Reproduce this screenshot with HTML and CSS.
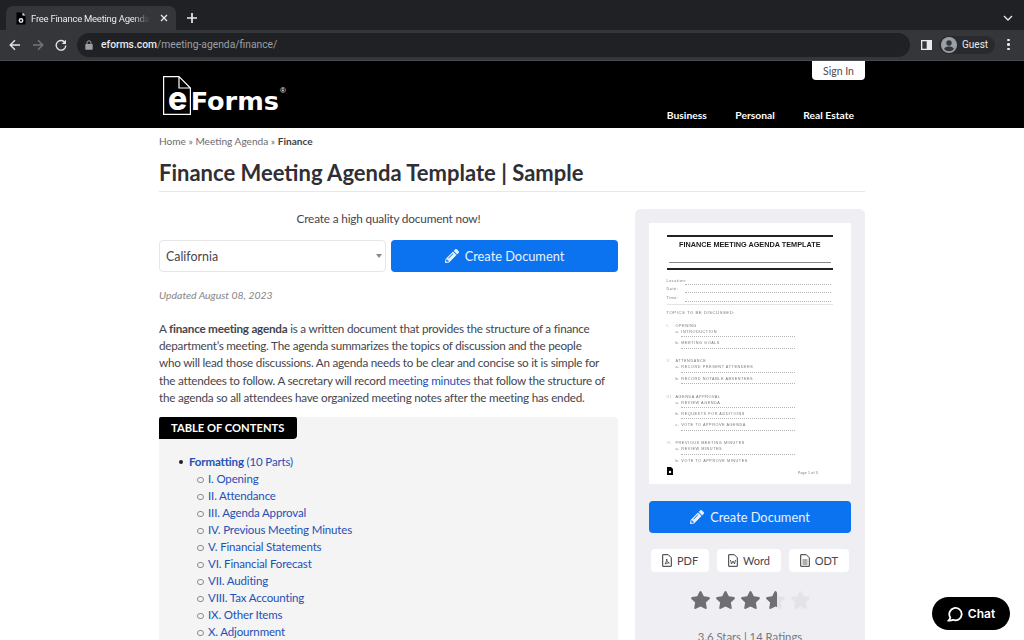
FILE: index.html
```html
<!DOCTYPE html>
<html lang="en">

<head>
    <meta charset="UTF-8">
    <meta name="viewport" content="width=device-width, initial-scale=1.0">
    <title>Finance Meeting Agenda Template</title>
    <link rel="stylesheet" href="styles.css">
</head>

<body>
    <svg class="defs" width="0" height="0">
        <defs>
            <symbol id="pencil" viewBox="0 0 512 512">
                <path fill="currentColor" d="M497.9 142.1l-46.1 46.1c-4.7 4.7-12.3 4.7-17 0l-111-111c-4.7-4.7-4.7-12.3 0-17l46.1-46.1c18.7-18.7 49.1-18.7 67.9 0l60.1 60.1c18.8 18.7 18.8 49.1 0 67.9zM284.2 99.8L21.6 362.4.4 483.9c-2.9 16.4 11.4 30.6 27.8 27.8l121.5-21.3 262.6-262.6c4.7-4.7 4.7-12.3 0-17l-111-111c-4.8-4.7-12.4-4.7-17.1 0zM124.1 339.9c-5.5-5.5-5.5-14.3 0-19.8l154-154c5.5-5.5 14.3-5.5 19.8 0s5.5 14.3 0 19.8l-154 154c-5.5 5.5-14.3 5.5-19.8 0zM88 424h48v36.3l-64.5 11.3-31.1-31.1L51.7 376H88v48z" />
            </symbol>
            <symbol id="star" viewBox="0 0 576 512">
                <path d="M259.3 17.8L194 150.2 47.9 171.5c-26.2 3.8-36.7 36.1-17.7 54.6l105.7 103-25 145.5c-4.5 26.3 23.2 46 46.4 33.7L288 439.6l130.7 68.7c23.2 12.2 50.9-7.4 46.4-33.7l-25-145.5 105.7-103c19-18.5 8.5-50.8-17.7-54.6L382 150.2 316.7 17.8c-11.7-23.6-45.6-23.9-57.4 0z" />
            </symbol>
            <linearGradient id="partStar">
                <stop offset="60%" stop-color="#6f6f73" />
                <stop offset="60%" stop-color="#e4e4e8" />
            </linearGradient>
        </defs>
    </svg>

    <div class="browser">
        <div class="tabstrip">
            <div class="tab">
                <svg class="favicon" viewBox="0 0 10 13" width="10" height="13">
                    <path fill="#000" d="M.5.5h6l3 3v9h-9z" />
                    <path fill="#e8eaed" d="M6.500.5l3 3h-3z" />
                    <circle cx="5" cy="8.500" r="2.400" fill="#e8eaed" />
                    <circle cx="5" cy="8.500" r="1" fill="#000" />
                </svg>
                <span class="tab-title">Free Finance Meeting Agenda</span>
                <svg class="tab-close" viewBox="0 0 10 10" width="10" height="10">
                    <path d="M2 2l6 6M8 2l-6 6" />
                </svg>
            </div>
            <svg class="new-tab" viewBox="0 0 12 12" width="12" height="12">
                <path d="M6 1v10M1 6h10" />
            </svg>
            <svg class="tab-menu" viewBox="0 0 10 6" width="10" height="6">
                <path d="M1 1l4 4 4-4" />
            </svg>
        </div>
        <div class="toolbar">
            <svg class="tool-icon back" viewBox="0 0 12 12" width="12" height="12">
                <path d="M11 6H1.500M6 1.200L1.200 6 6 10.800" />
            </svg>
            <svg class="tool-icon forward" viewBox="0 0 12 12" width="12" height="12">
                <path d="M1 6h9.500M6 1.200L10.800 6 6 10.800" />
            </svg>
            <svg class="tool-icon reload" viewBox="0 0 12 12" width="12" height="12">
                <path d="M10.200 4A4.800 4.800 0 1 0 10.800 6.500" />
                <path class="solid" d="M11 .8v4.200H6.800z" />
            </svg>
            <div class="omnibox">
                <svg class="lock" viewBox="0 0 8 10" width="8" height="10">
                    <path fill="#9aa0a6" d="M1 4h6a.7.7 0 0 1 .7.7v4.300a.7.7 0 0 1-.7.7H1a.7.7 0 0 1-.7-.7V4.700a.7.7 0 0 1 .7-.7z" />
                    <path fill="none" stroke="#9aa0a6" d="M2 4V2.800a2 2 0 0 1 4 0V4" />
                </svg>
                <span class="host">eforms.com</span><span class="path">/meeting-agenda/finance/</span>
            </div>
            <svg class="side-panel" viewBox="0 0 11 10" width="11" height="10">
                <path fill="#e8eaed" d="M0 0h11v10H0z" />
                <path fill="#35363a" d="M1.300 1.300h4.400v7.400H1.300z" />
            </svg>
            <div class="guest">
                <svg viewBox="0 0 16 16" width="16" height="16">
                    <circle cx="8" cy="8" r="8" fill="#9aa0a6" />
                    <circle cx="8" cy="6" r="2.700" fill="#35363a" />
                    <path fill="#35363a" d="M3 12c1-2 3-2.500 5-2.500s4 .5 5 2.500a6.500 6.500 0 0 1-10 0z" />
                </svg>
                <span>Guest</span>
            </div>
            <div class="dots"><i></i><i></i><i></i></div>
        </div>
    </div>

    <header class="site-header">
        <div class="wrap header-inner">
            <a class="logo">
                <svg class="logo-page" viewBox="0 0 28 39" width="28" height="39">
                    <path d="M16 .6H.6v37.800h26.800V12L16 .6v11.400h11.400" />
                </svg>
                <span class="logo-e">e</span><span class="logo-forms">Forms</span><span class="logo-reg">®</span>
            </a>
            <button class="sign-in">Sign In</button>
            <nav class="main-nav">
                <a>Business</a>
                <a>Personal</a>
                <a>Real Estate</a>
            </nav>
        </div>
    </header>

    <div class="wrap page">
        <p class="crumbs">Home » Meeting Agenda » <b>Finance</b></p>
        <h1>Finance Meeting Agenda Template | Sample</h1>

        <div class="columns">
            <main class="main-col">
                <p class="cta-text">Create a high quality document now!</p>
                <div class="cta-row">
                    <div class="state-select">California</div>
                    <a class="btn-create">
                        <svg width="14" height="14"><use href="#pencil" /></svg>
                        Create Document
                    </a>
                </div>
                <p class="updated">Updated August 08, 2023</p>
                <p class="intro">A <b>finance meeting agenda</b> is a written document that provides the structure of a finance department’s meeting. The agenda summarizes the topics of discussion and the people who&nbsp;will lead those discussions. An agenda needs to be clear and concise so it is simple for the&nbsp;attendees to follow. A secretary will record <a>meeting minutes</a> that follow the structure of the&nbsp;agenda so all attendees have organized meeting notes after the meeting has ended.</p>

                <section class="toc">
                    <h2>TABLE OF CONTENTS</h2>
                    <ul class="toc-list">
                        <li><a><b>Formatting</b> (10 Parts)</a>
                            <ul>
                                <li><a>I. Opening</a></li>
                                <li><a>II. Attendance</a></li>
                                <li><a>III. Agenda Approval</a></li>
                                <li><a>IV. Previous Meeting Minutes</a></li>
                                <li><a>V. Financial Statements</a></li>
                                <li><a>VI. Financial Forecast</a></li>
                                <li><a>VII. Auditing</a></li>
                                <li><a>VIII. Tax Accounting</a></li>
                                <li><a>IX. Other Items</a></li>
                                <li><a>X. Adjournment</a></li>
                            </ul>
                        </li>
                    </ul>
                </section>
            </main>

            <aside class="side-col">
                <div class="doc">
                    <div class="doc-rule"></div>
                    <div class="doc-title">FINANCE MEETING AGENDA TEMPLATE</div>
                    <div class="doc-blank"></div>
                    <div class="doc-rule"></div>
                    <div class="doc-fields">
                        <div class="doc-field"><span>Location:</span><i></i></div>
                        <div class="doc-field"><span>Date:</span><i></i></div>
                        <div class="doc-field"><span>Time:</span><i></i></div>
                    </div>
                    <div class="doc-topics">TOPICS TO BE DISCUSSED:</div>

                    <div class="doc-head"><em>I.</em>OPENING</div>
                    <div class="doc-item">a. INTRODUCTION</div>
                    <div class="doc-item">b. MEETING GOALS</div>

                    <div class="doc-head"><em>II.</em>ATTENDANCE</div>
                    <div class="doc-item">a. RECORD PRESENT ATTENDEES</div>
                    <div class="doc-item">b. RECORD NOTABLE ABSENTEES</div>

                    <div class="doc-head"><em>III.</em>AGENDA APPROVAL</div>
                    <div class="doc-item">a. REVIEW AGENDA</div>
                    <div class="doc-item">b. REQUESTS FOR ADDITIONS</div>
                    <div class="doc-item">c. VOTE TO APPROVE AGENDA</div>

                    <div class="doc-head"><em>IV.</em>PREVIOUS MEETING MINUTES</div>
                    <div class="doc-item">a. REVIEW MINUTES</div>
                    <div class="doc-item last">b. VOTE TO APPROVE MINUTES</div>

                    <div class="doc-foot">
                        <svg viewBox="0 0 6 8" width="6" height="8"><path d="M0 0h4l2 2v6H0z" /><circle cx="3" cy="5" r="1.200" fill="#fff" /></svg>
                        <span>Page 1 of 3</span>
                    </div>
                </div>

                <a class="btn-create side-btn">
                    <svg width="14" height="14"><use href="#pencil" /></svg>
                    Create Document
                </a>

                <div class="formats">
                    <a class="format">
                        <svg viewBox="0 0 10 13" width="10" height="13"><path class="sheet" d="M.7.7h5.600l3 3v8.600H.7z" /><path class="mark" d="M3 10c1-1 1.500-3 1.700-5 .3 2 1.300 3.500 2.600 4-1.500-.2-3 .2-4.300 1z" /></svg>
                        PDF
                    </a>
                    <a class="format">
                        <svg viewBox="0 0 10 13" width="10" height="13"><path class="sheet" d="M.7.7h5.600l3 3v8.600H.7z" /><path class="mark" d="M2.500 6l1 4 1.500-3 1.500 3 1-4" /></svg>
                        Word
                    </a>
                    <a class="format">
                        <svg viewBox="0 0 10 13" width="10" height="13"><path class="sheet" d="M.7.7h5.600l3 3v8.600H.7z" /><path class="mark" d="M2.500 6h5M2.500 8h5M2.500 10h5" /></svg>
                        ODT
                    </a>
                </div>

                <div class="stars">
                    <svg width="23" height="18"><use href="#star" /></svg>
                    <svg width="23" height="18"><use href="#star" /></svg>
                    <svg width="23" height="18"><use href="#star" /></svg>
                    <svg width="23" height="18" class="part"><use href="#star" /></svg>
                    <svg width="23" height="18" class="off"><use href="#star" /></svg>
                </div>
                <p class="rating">3.6 Stars | 14 Ratings</p>
            </aside>
        </div>
    </div>

    <a class="chat">
        <svg viewBox="0 0 16 16" width="16" height="16">
            <path d="M3.300 11.500A6.200 6.200 0 1 1 6 13.800c-1.500.6-3 .9-4.300.7 .8-.8 1.400-1.800 1.600-3z" />
        </svg>
        Chat
    </a>
</body>

</html>
```

FILE: styles.css
```css
* {
    box-sizing: border-box;
}

html,
body {
    height: 640px;
    overflow: hidden;
}

body {
    margin: 0;
    background: #fff;
    color: #45454d;
    font-family: Lato, "Open Sans", sans-serif;
    font-size: 12px;
}

p {
    margin: 0;
}

.defs {
    display: block;
    height: 0;
}

/* browser chrome */
.browser {
    font-family: Roboto, "Liberation Sans", sans-serif;
    color: #e8eaed;
}

.tabstrip {
    display: flex;
    align-items: flex-end;
    height: 30px;
    padding-left: 6px;
    background: #202124;
}

.tab {
    display: flex;
    align-items: center;
    width: 170px;
    height: 24px;
    padding: 0 7px 0 10px;
    border-radius: 7px 7px 0 0;
    background: #35363a;
}

.favicon {
    flex: none;
}

.tab-title {
    flex: 1;
    margin-left: 5px;
    overflow: hidden;
    font-size: 9.500px;
    letter-spacing: -.25px;
    white-space: nowrap;
    -webkit-mask-image: linear-gradient(to right, #000 82%, transparent 96%);
    mask-image: linear-gradient(to right, #000 82%, transparent 96%);
}

.tab-close path,
.tab-menu path {
    fill: none;
    stroke: #e8eaed;
    stroke-width: 1.300;
}

.tab-close {
    margin-left: 4px;
}

.new-tab {
    margin: 0 0 6px 10px;
}

.new-tab path {
    fill: none;
    stroke: #e8eaed;
    stroke-width: 1.700;
}

.tab-menu {
    margin: 0 11px 9px auto;
}

.toolbar {
    display: flex;
    align-items: center;
    height: 31px;
    padding: 0 10px 1px 9px;
    border-bottom: 1px solid #4a4b4f;
    background: #35363a;
}

.tool-icon {
    flex: none;
    margin-right: 11px;
}

.tool-icon path {
    fill: none;
    stroke: #e1e3e6;
    stroke-width: 1.400;
}

.tool-icon path.solid {
    fill: #e1e3e6;
    stroke: none;
}

.forward path {
    stroke: #75777b;
}

.reload {
    margin-right: 10px;
}

.omnibox {
    display: flex;
    align-items: center;
    flex: none;
    width: 833px;
    height: 24px;
    padding-left: 8px;
    border-radius: 12px;
    background: #202124;
    font-size: 10.300px;
}

.lock {
    margin-right: 8px;
}

.host {
    font-weight: 500;
}

.path {
    color: #9aa0a6;
}

.side-panel {
    flex: none;
    margin-left: 11px;
}

.guest {
    display: flex;
    align-items: center;
    gap: 5px;
    flex: none;
    width: 56px;
    height: 18px;
    margin-left: 7px;
    padding-left: 2px;
    border-radius: 9px;
    background: #292a2d;
    font-size: 10px;
}

.dots {
    display: flex;
    flex-direction: column;
    gap: 2px;
    margin-left: 12px;
}

.dots i {
    display: block;
    width: 2.500px;
    height: 2.500px;
    border-radius: 50%;
    background: #e8eaed;
}

/* site header */
.wrap {
    width: 706px;
    margin-left: 159px;
}

.site-header {
    height: 67px;
    background: #000;
}

.header-inner {
    position: relative;
    display: flex;
    justify-content: flex-end;
    height: 100%;
}

.logo {
    position: absolute;
    top: 15px;
    left: 3.500px;
    display: flex;
    align-items: baseline;
    width: 130px;
    color: #fff;
    font-weight: 700;
}

.logo-page {
    position: absolute;
    top: 0;
    left: 0;
}

.logo-page path {
    fill: none;
    stroke: #fff;
    stroke-width: 1.200;
}

.logo-e {
    margin: 4px 0 0 5.500px;
    font-family: Inter, sans-serif;
    font-size: 32px;
    font-weight: 800;
    line-height: 38px;
}

.logo-forms {
    margin-left: 3.500px;
    font-family: "DejaVu Sans", sans-serif;
    font-size: 25.500px;
    line-height: 30px;
}

.logo-reg {
    align-self: flex-start;
    margin: 10px 0 0 1px;
    font-family: "Liberation Sans", sans-serif;
    font-size: 8px;
    font-weight: 400;
    line-height: 10px;
}

.sign-in {
    position: absolute;
    top: 0;
    right: 0;
    width: 53px;
    height: 19px;
    padding: 0;
    border: 0;
    border-radius: 0 0 4px 4px;
    background: #fff;
    color: #4b4b52;
    font: 10.500px Lato, sans-serif;
}

.main-nav {
    display: flex;
    gap: 28.500px;
    margin: 48px 11px 0 0;
    color: #fff;
    font-size: 10.300px;
    font-weight: 700;
}

/* page */
.crumbs {
    padding-top: 6px;
    color: #6b6b72;
    font-size: 10.100px;
    line-height: 14px;
}

.crumbs b {
    color: #3f3f46;
}

h1 {
    margin: 10px 0 0;
    padding-bottom: 4px;
    border-bottom: 1px solid #e8e8ea;
    color: #2f2f35;
    font-size: 22px;
    font-weight: 700;
    line-height: 29px;
}

.columns {
    display: flex;
    justify-content: space-between;
    margin-top: 17px;
}

.main-col {
    width: 459px;
}

.cta-text {
    padding-top: 1px;
    font-size: 11.800px;
    letter-spacing: -.17px;
    line-height: 17px;
    text-align: center;
}

.cta-row {
    display: flex;
    gap: 5px;
    margin-top: 13px;
}

.state-select {
    position: relative;
    flex: 0 0 227px;
    height: 32px;
    padding-left: 6px;
    border: 1px solid #e6e6e8;
    border-radius: 4px;
    font-size: 12.400px;
    line-height: 31px;
}

.state-select::after {
    content: "";
    position: absolute;
    top: 13px;
    right: 3px;
    border: 3.500px solid transparent;
    border-top: 4px solid #888;
}

.btn-create {
    display: flex;
    align-items: center;
    justify-content: center;
    gap: 6px;
    flex: 0 0 227px;
    height: 32px;
    border-radius: 4px;
    background: #0b72f0;
    color: #e9f2ff;
    font-size: 12.800px;
}

.updated {
    margin-top: 16px;
    color: #85858b;
    font-size: 10.450px;
    font-style: italic;
    line-height: 14px;
}

.intro {
    margin-top: 18px;
    font-size: 11.700px;
    letter-spacing: -.23px;
    line-height: 17.200px;
}

.intro a {
    color: #2450b4;
}

.toc {
    margin-top: 11px;
    padding-bottom: 10px;
    border-radius: 4px;
    background: #f4f4f5;
}

.toc h2 {
    display: inline-block;
    width: 138px;
    height: 22px;
    margin: 0;
    padding-left: 12px;
    border-radius: 2px 2px 4px 0;
    background: #000;
    color: #fff;
    font-size: 11.200px;
    font-weight: 700;
    line-height: 22px;
    vertical-align: top;
}

.toc-list {
    margin: 14px 0 0;
    padding-left: 30px;
    font-size: 11.500px;
    letter-spacing: -.15px;
    line-height: 17.050px;
    list-style: none;
}

.toc-list ul {
    margin: 0;
    padding-left: 19px;
    list-style: none;
}

.toc-list li {
    position: relative;
}

.toc-list li::before {
    content: "";
    position: absolute;
    top: 6.500px;
    left: -10.500px;
    width: 4px;
    height: 4px;
    border-radius: 50%;
    background: #222;
}

.toc-list ul li::before {
    top: 6.500px;
    left: -11px;
    width: 4.500px;
    height: 4.500px;
    border: 1px solid #8c8c90;
    background: none;
}

.toc-list a {
    color: #2450b4;
}

/* sidebar */
.side-col {
    width: 230px;
    height: 480px;
    padding: 14px;
    border-radius: 6px;
    background: #eeeef3;
}

.doc {
    height: 261px;
    padding: 12px 18px 0 17.500px;
    background: #fff;
    color: #77777a;
    font-family: "Liberation Sans", sans-serif;
    font-size: 3.800px;
    letter-spacing: .55px;
    filter: blur(.25px);
}

.doc-rule {
    height: 2px;
    background: #222;
}

.doc-title {
    margin-top: 3px;
    color: #1c1c1c;
    font-size: 7.300px;
    font-weight: 700;
    letter-spacing: 0;
    line-height: 9px;
    text-align: center;
}

.doc-blank {
    height: 1px;
    margin: 13px 2px 5px;
    background: #888;
}

.doc-fields {
    margin-top: 6.500px;
}

.doc-field {
    display: flex;
    align-items: center;
    height: 8.500px;
}

.doc-field span {
    width: 18px;
}

.doc-field i {
    flex: 1;
    height: 5px;
    margin: 3px 2px 0 0;
    border-bottom: 1px dotted #b5b5b5;
}

.doc-topics {
    margin-top: 2px;
    padding-top: 5px;
    border-top: 1px solid #e4e4e4;
    font-size: 4.200px;
    line-height: 6px;
}

.doc-head {
    margin-top: 7px;
    line-height: 6px;
}

.doc-head em {
    display: inline-block;
    width: 9px;
    color: #a8bcd8;
    font-style: normal;
}

.doc-item {
    width: 119px;
    height: 11.200px;
    margin-left: 9px;
    line-height: 6px;
}

.doc-item::after {
    content: "";
    display: block;
    height: 1px;
    margin: .4px 0 0 5px;
    border-bottom: 1px dotted #b5b5b5;
}

.doc-item.last {
    height: 6px;
}

.doc-item.last::after {
    display: none;
}

.doc-foot {
    display: flex;
    align-items: flex-end;
    justify-content: space-between;
    margin-top: 3px;
    padding-right: 15px;
    font-size: 3.500px;
    letter-spacing: .2px;
}

.side-btn {
    margin-top: 17px;
}

.formats {
    display: flex;
    justify-content: space-between;
    margin-top: 16px;
    padding: 0 2px;
}

.format {
    display: flex;
    align-items: center;
    justify-content: center;
    gap: 5px;
    height: 23px;
    padding: 0 11px;
    border-radius: 4px;
    background: #fff;
    color: #46464c;
    font-size: 11px;
}

.sheet {
    fill: none;
    stroke: #333;
    stroke-width: 1;
}

.mark {
    fill: none;
    stroke: #333;
    stroke-width: .8;
}

.stars {
    display: flex;
    justify-content: center;
    gap: 2px;
    margin-top: 19px;
    fill: #6f6f73;
}

.stars .part {
    fill: url(#partStar);
}

.stars .off {
    fill: #e4e4e8;
}

.rating {
    margin-top: 21px;
    color: #77777c;
    font-size: 11.300px;
    text-align: center;
}

/* floating chat button */
.chat {
    position: fixed;
    top: 597px;
    left: 932px;
    display: flex;
    align-items: center;
    justify-content: center;
    gap: 5px;
    width: 78px;
    height: 33px;
    border-radius: 17px;
    background: #000;
    color: #fff;
    font-family: Inter, sans-serif;
    font-size: 12px;
    font-weight: 600;
}

.chat path {
    fill: none;
    stroke: #fff;
    stroke-width: 1.800;
}
```
